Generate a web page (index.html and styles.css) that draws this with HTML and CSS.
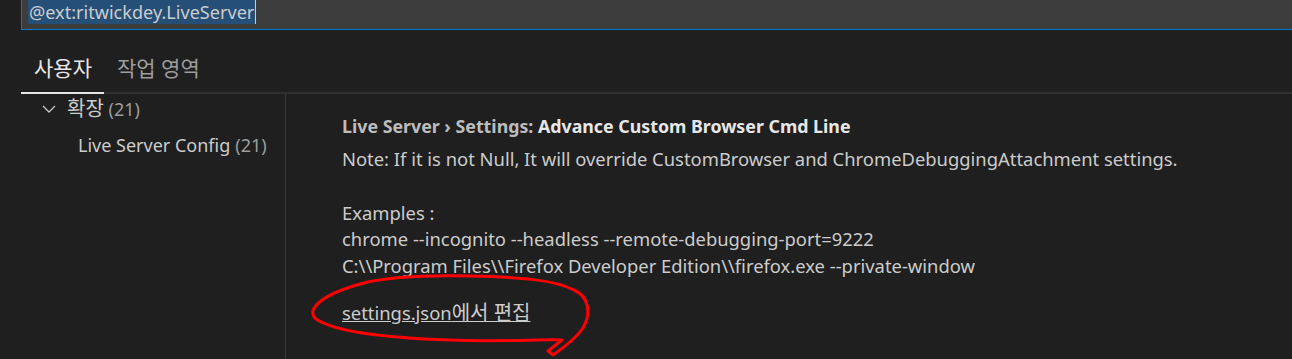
FILE: index.html
```html
<!DOCTYPE html>
<html lang="ko">

<head>
  <meta charset="UTF-8" />
  <meta name="viewport" content="width=device-width, initial-scale=1.0" />
  <title>Settings - Live Server</title>
  <link rel="stylesheet" href="styles.css">
</head>

<body>
  <div class="search">
    <span class="search-query">@ext:ritwickdey.LiveServer</span><span class="caret"></span>
  </div>

  <div class="tabs">
    <div class="tab active">사용자</div>
    <div class="tab">작업 영역</div>
  </div>

  <div class="editor">
    <div class="toc">
      <div class="toc-row group">
        <svg class="chevron" width="16" height="16" viewBox="0 0 16 16">
          <path d="M2 5 L8 11 L14 5" fill="none" stroke="#c5c5c5" stroke-width="1.3" />
        </svg>
        <span><span class="ko">확장</span> <span class="count">(21)</span></span>
      </div>
      <div class="toc-row child">Live Server Config <span class="count">(21)</span></div>
    </div>

    <div class="setting">
      <div class="setting-title">
        <span class="category">Live Server › Settings: </span>Advance Custom Browser Cmd Line
      </div>
      <div class="setting-desc">
        <p>Note: If it is not Null, It will override CustomBrowser and ChromeDebuggingAttachment settings.</p>
        <p>Examples :<br>
          chrome --incognito --headless --remote-debugging-port=9222<br>
          C:\\Program Files\\Firefox Developer Edition\\firefox.exe --private-window</p>
      </div>
      <a class="edit-link" href="#">settings.json<span class="ko">에서 편집</span></a>
    </div>
  </div>

  <!-- hand-drawn red circle around the link -->
  <svg class="scribble" width="1292" height="359" viewBox="0 0 1292 359">
    <path d="M316 319 C 335 332, 390 338, 450 340 C 500 342, 545 339, 562 340
             L 548 351 L 553 355 C 560 350, 575 340, 583 328
             C 592 312, 588 296, 574 290 C 555 280, 520 277, 470 276
             C 420 275, 385 277, 360 284 C 335 291, 318 300, 313 310 C 312 315, 314 318, 318 320"
      fill="none" stroke="#ff0000" stroke-width="3" stroke-linecap="round" stroke-linejoin="round" />
  </svg>
</body>

</html>
```

FILE: styles.css
```css
body {
  margin: 0;
  height: 359px;
  overflow: hidden;
  background: #1f1f1f;
  color: #cccccc;
  font-family: "Noto Sans", "Noto Sans CJK KR", sans-serif;
  font-size: 18.4px;
}

.ko {
  font-size: 20px;
}

.search {
  margin-left: 21px;
  height: 29px;
  background: #3c3c3c;
  border-left: 1px solid #0078d4;
  border-bottom: 1px solid #0078d4;
  display: flex;
  align-items: flex-start;
  padding-left: 6px;
}

.search-query {
  background: #264f78;
  color: #cccccc;
  font-size: 18.1px;
  line-height: 24px;
  padding: 0 1px;
}

.caret {
  width: 1px;
  height: 24px;
  background: #cccccc;
}

.tabs {
  margin: 26px 0 0 21px;
  display: flex;
  border-bottom: 2px solid #2f2f2f;
}

.tab {
  padding: 0 12px 12px 13px;
  line-height: 24px;
  font-size: 21px;
  color: #9d9d9d;
  margin-bottom: -2px;
  border-bottom: 2px solid transparent;
}

.tab.active {
  color: #e7e7e7;
  border-bottom-color: #e7e7e7;
}

.editor {
  display: flex;
  margin-left: 21px;
  height: 265px;
}

.toc {
  width: 264px;
  border-right: 1px solid #3a3a3a;
}

.toc-row {
  display: flex;
  align-items: center;
  font-size: 18px;
  color: #cccccc;
  white-space: nowrap;
}

.toc-row.group {
  padding-left: 20px;
  height: 30px;
  gap: 10px;
  line-height: 24px;
}

.toc-row.child {
  padding-left: 57px;
  height: 42px;
  gap: 5px;
}

.count {
  color: #9d9d9d;
}

.setting {
  padding: 19px 0 0 56px;
}

.setting-title {
  font-weight: 700;
  font-size: 17.8px;
  color: #e7e7e7;
  line-height: 26px;
}

.setting-title .category {
  color: #bdbdbd;
}

.setting-desc {
  padding-top: 7px;
}

.setting-desc p {
  margin: 0 0 27px;
  line-height: 26.5px;
  color: #cccccc;
}

.setting-desc p:last-child {
  margin-bottom: 21px;
}

.edit-link {
  display: inline-block;
  color: #cccccc;
  text-decoration: underline;
  line-height: 24px;
}

.scribble {
  position: absolute;
  left: 0;
  top: 0;
  pointer-events: none;
}
```
